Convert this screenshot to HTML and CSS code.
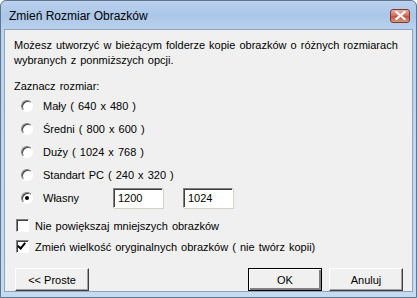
FILE: index.html
```html
<!DOCTYPE html>
<html lang="pl">

<head>
    <meta charset="UTF-8">
    <meta name="viewport" content="width=device-width, initial-scale=1.0">
    <title>Zmień Rozmiar Obrazków</title>
    <link rel="stylesheet" href="styles.css">
</head>

<body>
    <div class="window">
        <div class="titlebar">
            <span class="title">Zmień Rozmiar Obrazków</span>
            <button class="close" title="Zamknij">
                <svg width="11" height="9" viewBox="0 0 11 9">
                    <path d="M1.5 1 L9.5 8 M9.5 1 L1.5 8" stroke="#fff" stroke-width="2.2" stroke-linecap="square" />
                </svg>
            </button>
        </div>

        <div class="client">
            <p class="intro">Możesz utworzyć w bieżącym folderze kopie obrazków o różnych rozmiarach<br>wybranych z ponmiższych opcji.</p>

            <p class="group">Zaznacz rozmiar:</p>

            <div class="options">
                <label class="row"><span class="radio"></span>Mały ( 640 x 480 )</label>
                <label class="row"><span class="radio"></span>Średni ( 800 x 600 )</label>
                <label class="row"><span class="radio"></span>Duży ( 1024 x 768 )</label>
                <label class="row"><span class="radio"></span>Standart PC ( 240 x 320 )</label>
                <div class="row">
                    <label class="custom"><span class="radio checked"></span>Własny</label>
                    <span class="field">1200</span>
                    <span class="field">1024</span>
                </div>
            </div>

            <div class="checks">
                <label class="check-row"><span class="check"></span>Nie powiększaj mniejszych obrazków</label>
                <label class="check-row"><span class="check checked"></span>Zmień wielkość oryginalnych obrazków ( nie twórz kopii)</label>
            </div>

            <div class="buttons">
                <button class="btn">&lt;&lt; Proste</button>
                <div class="right">
                    <button class="btn default">OK</button>
                    <button class="btn">Anuluj</button>
                </div>
            </div>
        </div>
    </div>
</body>

</html>
```

FILE: styles.css
```css
body {
    margin: 0;
    font-family: "Liberation Sans", Arial, sans-serif;
    font-size: 11px;
    word-spacing: 1px;
    color: #000;
    background: #fff;
}

.window {
    width: 417px;
    height: 298px;
    box-sizing: border-box;
    display: flex;
    flex-direction: column;
    border: 1px solid #5f7590;
    border-radius: 6px 6px 0 0;
    background: linear-gradient(#bcd2ee 0, #aac6e8 14px, #bcd3ee 30px, #c6daf0 100%);
    padding: 0 3px 5px;
}

.titlebar {
    height: 29px;
    display: flex;
    align-items: center;
    justify-content: space-between;
    padding: 0 3px 0 5px;
}

.title {
    font-size: 12px;
    word-spacing: 0;
    color: #000;
    margin-top: 1px;
}

.close {
    width: 20px;
    height: 14px;
    padding: 0;
    border: 1px solid #7a3a32;
    border-radius: 3px;
    background: linear-gradient(#eab0a0, #d0685a 50%, #c4503e 51%, #dc9480);
    display: flex;
    align-items: center;
    justify-content: center;
    margin-top: 1px;
}

.client {
    flex: 1;
    background: #f0f0f0;
    border: 1px solid #8ea4bf;
    padding: 8px 9px 0 9px;
    display: flex;
    flex-direction: column;
}

.intro {
    margin: 0;
    line-height: 15px;
    white-space: nowrap;
}

.group {
    margin: 11px 0 0;
    line-height: 15px;
}

.options {
    display: flex;
    flex-direction: column;
    margin-top: 0;
    padding-left: 7px;
}

.row {
    height: 23px;
    display: flex;
    align-items: center;
}

.custom {
    display: flex;
    align-items: center;
    width: 92px;
}

.radio {
    width: 12px;
    height: 12px;
    box-sizing: border-box;
    border-radius: 50%;
    border: 1px solid;
    border-color: #808080 #fff #fff #808080;
    background: #fff;
    box-shadow: inset 1px 1px 0 #404040;
    margin-right: 10px;
    position: relative;
}

.radio.checked::after {
    content: "";
    position: absolute;
    left: 3px;
    top: 3px;
    width: 4px;
    height: 4px;
    border-radius: 50%;
    background: #000;
}

.field {
    width: 50px;
    height: 20px;
    box-sizing: border-box;
    background: #fff;
    border: 1px solid;
    border-color: #808080 #fff #fff #808080;
    box-shadow: inset 1px 1px 0 #404040, 1px 1px 0 #d4d0c8;
    padding: 3px 0 0 4px;
    margin-right: 20px;
}

.checks {
    display: flex;
    flex-direction: column;
    margin-top: 6px;
}

.check-row {
    height: 21px;
    display: flex;
    align-items: center;
}

.check {
    width: 13px;
    height: 13px;
    box-sizing: border-box;
    border: 1px solid;
    border-color: #808080 #fff #fff #808080;
    box-shadow: inset 1px 1px 0 #404040;
    background: #fff;
    margin: 0 6px 0 2px;
    position: relative;
}

.check.checked::after {
    content: "";
    position: absolute;
    left: 2px;
    top: 0;
    width: 3px;
    height: 6px;
    border: solid #000;
    border-width: 0 2px 2px 0;
    transform: rotate(40deg);
}

.buttons {
    display: flex;
    justify-content: space-between;
    margin-top: 11px;
    padding: 0 0 0 1px;
}

.right {
    display: flex;
    gap: 7px;
}

.btn {
    width: 74px;
    height: 23px;
    font-family: "Liberation Sans", Arial, sans-serif;
    font-size: 11px;
    color: #000;
    background: #f0f0f0;
    border: 1px solid;
    border-color: #fff #404040 #404040 #fff;
    box-shadow: inset -1px -1px 0 #a0a0a0;
    padding: 0;
}

.btn.default {
    border: 1px solid #000;
    box-shadow: inset 1px 1px 0 #fff, inset -2px -2px 0 #808080;
}
```
